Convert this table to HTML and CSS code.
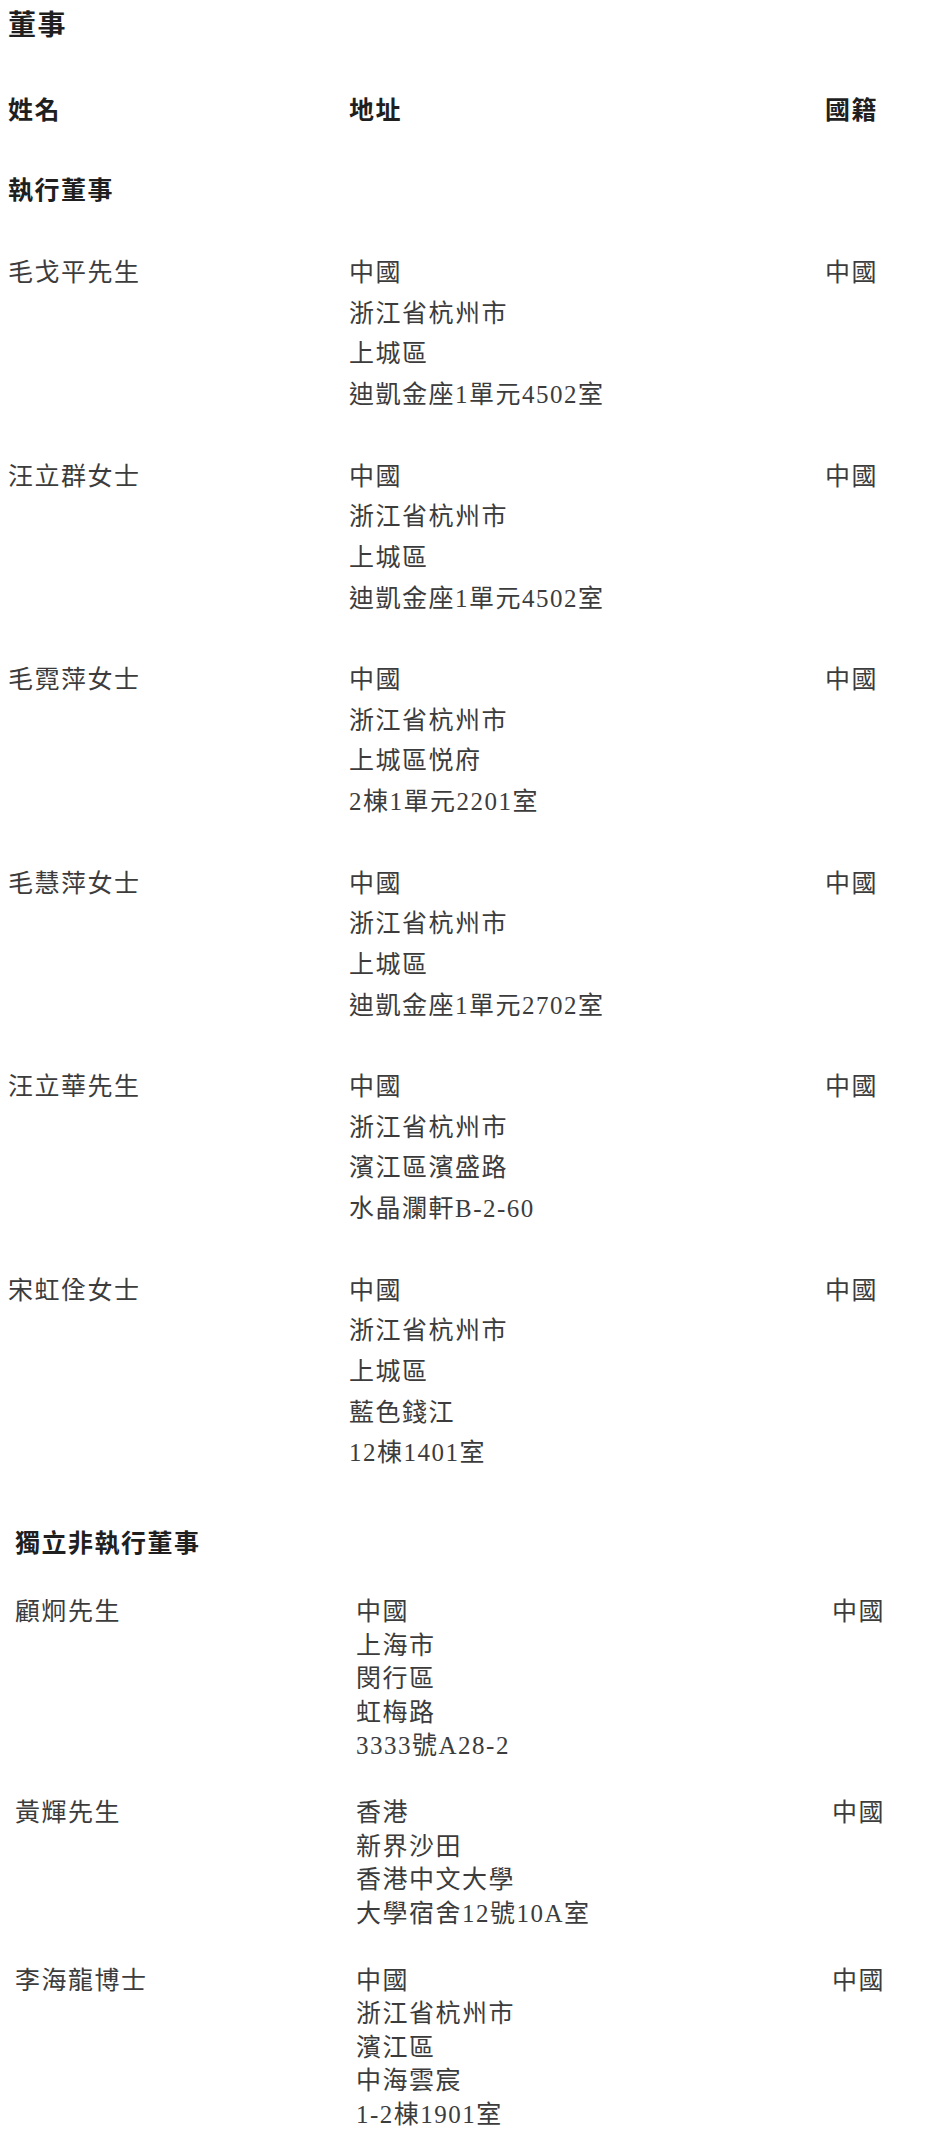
FILE: index.html
```html
<!DOCTYPE html>
<html lang="zh-Hant">
<head>
<meta charset="utf-8">
<title>董事</title>
<link rel="stylesheet" href="styles.css">
</head>
<body>
<div class="page">
  <h1 class="doc-title">董事</h1>
  <div class="grid-row col-head">
    <div>姓名</div>
    <div>地址</div>
    <div>國籍</div>
  </div>

  <section class="group group-exec">
    <h2 class="group-title">執行董事</h2>
    <div class="people">
      <div class="grid-row person">
        <div class="name">毛戈平先生</div>
        <div class="addr"><div>中國</div><div>浙江省杭州市</div><div>上城區</div><div>迪凱金座1單元4502室</div></div>
        <div class="nat">中國</div>
      </div>
      <div class="grid-row person">
        <div class="name">汪立群女士</div>
        <div class="addr"><div>中國</div><div>浙江省杭州市</div><div>上城區</div><div>迪凱金座1單元4502室</div></div>
        <div class="nat">中國</div>
      </div>
      <div class="grid-row person">
        <div class="name">毛霓萍女士</div>
        <div class="addr"><div>中國</div><div>浙江省杭州市</div><div>上城區悦府</div><div>2棟1單元2201室</div></div>
        <div class="nat">中國</div>
      </div>
      <div class="grid-row person">
        <div class="name">毛慧萍女士</div>
        <div class="addr"><div>中國</div><div>浙江省杭州市</div><div>上城區</div><div>迪凱金座1單元2702室</div></div>
        <div class="nat">中國</div>
      </div>
      <div class="grid-row person">
        <div class="name">汪立華先生</div>
        <div class="addr"><div>中國</div><div>浙江省杭州市</div><div>濱江區濱盛路</div><div>水晶瀾軒B-2-60</div></div>
        <div class="nat">中國</div>
      </div>
      <div class="grid-row person">
        <div class="name">宋虹佺女士</div>
        <div class="addr"><div>中國</div><div>浙江省杭州市</div><div>上城區</div><div>藍色錢江</div><div>12棟1401室</div></div>
        <div class="nat">中國</div>
      </div>
    </div>
  </section>

  <section class="group group-indep">
    <h2 class="group-title">獨立非執行董事</h2>
    <div class="people">
      <div class="grid-row person">
        <div class="name">顧炯先生</div>
        <div class="addr"><div>中國</div><div>上海市</div><div>閔行區</div><div>虹梅路</div><div>3333號A28-2</div></div>
        <div class="nat">中國</div>
      </div>
      <div class="grid-row person">
        <div class="name">黃輝先生</div>
        <div class="addr"><div>香港</div><div>新界沙田</div><div>香港中文大學</div><div>大學宿舍12號10A室</div></div>
        <div class="nat">中國</div>
      </div>
      <div class="grid-row person">
        <div class="name">李海龍博士</div>
        <div class="addr"><div>中國</div><div>浙江省杭州市</div><div>濱江區</div><div>中海雲宸</div><div>1-2棟1901室</div></div>
        <div class="nat">中國</div>
      </div>
    </div>
  </section>
</div>
</body>
</html>
```

FILE: styles.css
```css
html, body {
  margin: 0;
  padding: 0;
  background: #ffffff;
}

body {
  font-family: "Liberation Serif", "Noto Sans CJK TC", serif;
  font-size: 25px;
  color: #3c3c3c;
  letter-spacing: 1.5px;
}

.page {
  padding: 3px 0 0 8px;
}

.doc-title,
.col-head,
.group-title {
  font-family: "Noto Sans CJK TC", "Noto Sans CJK SC", sans-serif;
  font-weight: 700;
  color: #1f1f1f;
  margin: 0;
}

.doc-title {
  font-size: 28px;
  line-height: 40px;
}

.grid-row {
  display: grid;
  grid-template-columns: 341px 476px 1fr;
}

.col-head {
  font-size: 25px;
  line-height: 40px;
  margin-top: 45px;
}

.group-title {
  font-size: 25px;
}

/* Executive directors */
.group-exec .group-title {
  line-height: 40px;
  margin-top: 40px;
}

.group-exec .people {
  margin-top: 45px;
  line-height: 40.7px;
}

.group-exec .person + .person {
  margin-top: 40.7px;
}

/* Independent non-executive directors */
.group-indep {
  padding-left: 7px;
}

.group-indep .group-title {
  line-height: 34px;
  margin-top: 50px;
}

.group-indep .people {
  margin-top: 37px;
  line-height: 33.5px;
}

.group-indep .person + .person {
  margin-top: 33.5px;
}

.name,
.addr,
.nat {
  white-space: nowrap;
}
```
